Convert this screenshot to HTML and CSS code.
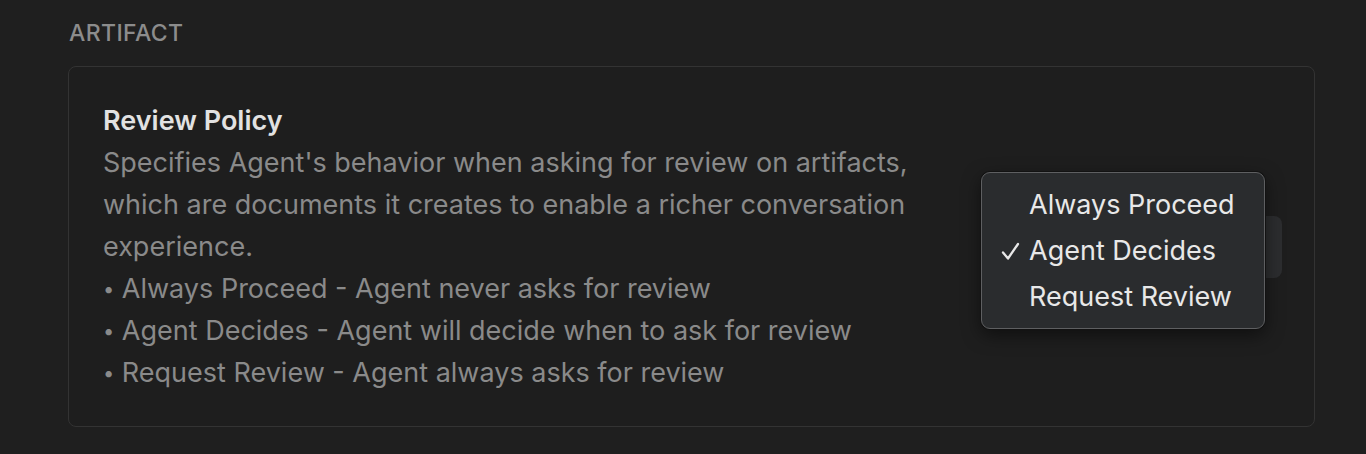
FILE: index.html
```html
<!DOCTYPE html>
<html>
<head>
<meta charset="utf-8">
<link rel="stylesheet" href="styles.css">
</head>
<body>
<div class="page">
  <div class="section-label">ARTIFACT</div>
  <div class="card">
    <div class="setting">
      <div class="info">
        <div class="title">Review Policy</div>
        <div class="desc">
          <p>Specifies Agent's behavior when asking for review on artifacts, which are documents it creates to enable a richer conversation experience.</p>
          <p><span class="bullet">•</span> Always Proceed - Agent never asks for review</p>
          <p><span class="bullet">•</span> Agent Decides - Agent will decide when to ask for review</p>
          <p><span class="bullet">•</span> Request Review - Agent always asks for review</p>
        </div>
      </div>
      <div class="control">
        <div class="select"></div>
        <div class="menu">
          <div class="item"><span class="check"></span>Always Proceed</div>
          <div class="item"><span class="check"><svg width="19" height="19" viewBox="0 0 19 19"><path d="M2 10.5 L7 16.5 L17 2" fill="none" stroke="#e8e8e8" stroke-width="2.3" stroke-linecap="round" stroke-linejoin="round"/></svg></span>Agent Decides</div>
          <div class="item"><span class="check"></span>Request Review</div>
        </div>
      </div>
    </div>
  </div>
</div>
</body>
</html>
```
FILE: styles.css
```css
html, body {
  margin: 0;
  padding: 0;
  background: #1f1f1f;
  height: 100%;
}
body {
  font-family: Inter, "Noto Sans", sans-serif;
  -webkit-font-smoothing: antialiased;
}
.page {
  padding: 20px 51px 0 68px;
}
.section-label {
  color: #8c8c8c;
  font-size: 23px;
  font-weight: 500;
  letter-spacing: 0.4px;
  line-height: 26px;
  padding-left: 1px;
  margin-bottom: 20px;
}
.card {
  border: 1px solid #333333;
  border-radius: 8px;
  background: #1e1e1e;
  padding: 33px 32px 32px 34px;
}
.setting {
  display: flex;
  justify-content: space-between;
  align-items: center;
}
.info {
  width: 835px;
}
.title {
  color: #e2e2e2;
  font-size: 27px;
  font-weight: 600;
  line-height: 42px;
}
.desc {
  color: #8a8a8a;
  font-size: 27px;
  line-height: 42px;
}
.desc p {
  margin: 0;
}
.bullet {
  font-size: 20px;
  vertical-align: 2px;
}
.control {
  position: relative;
  width: 301px;
  height: 62px;
}
.select {
  width: 100%;
  height: 62px;
  background: #2c2d2f;
  border-radius: 8px;
}
.menu {
  position: absolute;
  left: 0;
  top: -44px;
  width: 284px;
  background: #2a2c2e;
  border: 1px solid #5e5f61;
  border-radius: 9px;
  box-shadow: 0 0 0 1px #121212, 0 6px 18px rgba(0,0,0,0.5);
  padding: 9px 0 8px 0;
  box-sizing: border-box;
}
.item {
  display: flex;
  align-items: center;
  color: #e8e8e8;
  font-size: 27px;
  line-height: 46px;
  padding-left: 19px;
}
.check {
  display: inline-flex;
  align-items: center;
  width: 28px;
  height: 46px;
}
```
